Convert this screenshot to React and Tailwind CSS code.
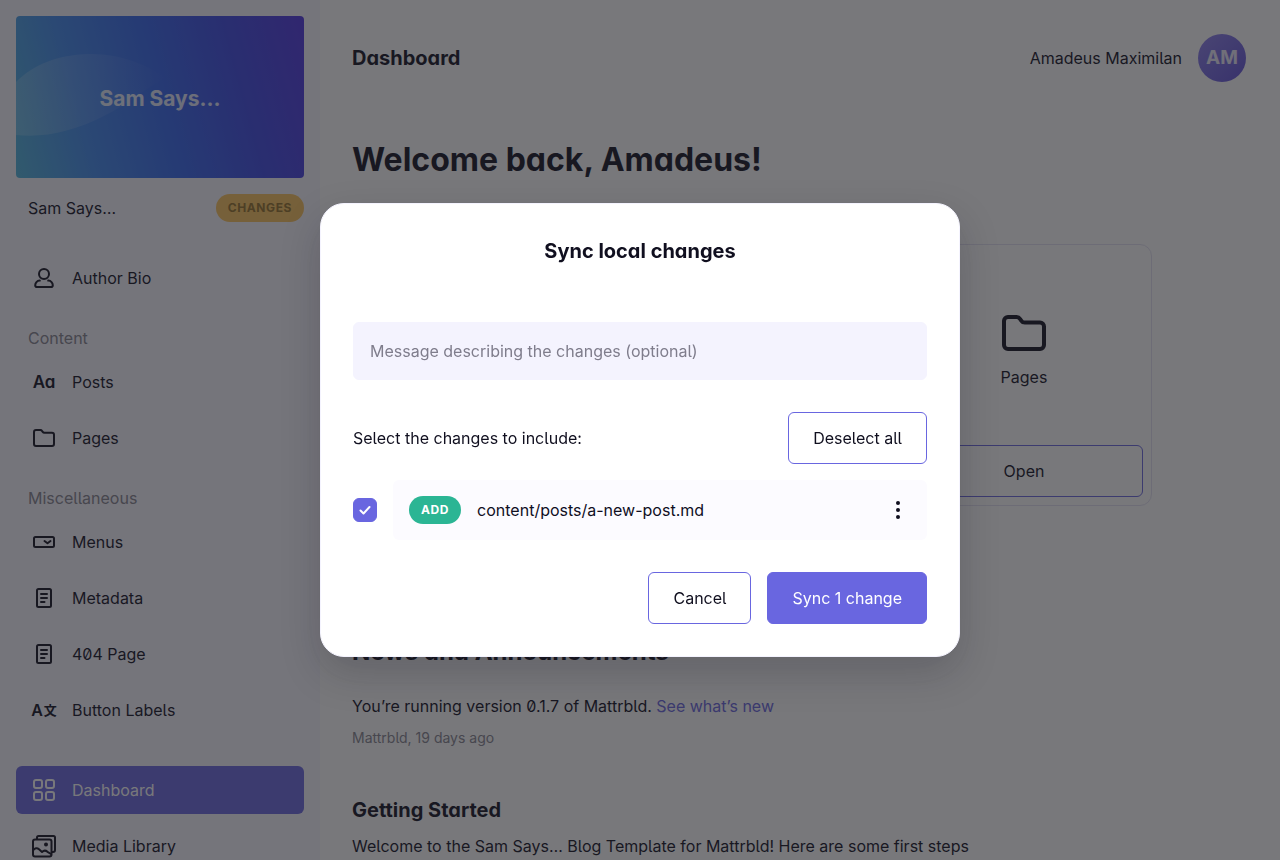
import { useState } from "react";

function Icon({ className = "size-6", children }) {
  return (
    <svg
      viewBox="0 0 24 24"
      fill="none"
      stroke="currentColor"
      strokeWidth="2"
      strokeLinecap="round"
      strokeLinejoin="round"
      aria-hidden="true"
      className={className}
    >
      {children}
    </svg>
  );
}

function UserIcon() {
  return (
    <Icon>
      <circle cx="12" cy="8" r="5" />
      <path d="M7.800 14.600C5 14.500 3.200 17 3.200 19.300c0 1.100.8 1.800 1.800 1.800h14c1 0 1.800-.7 1.800-1.800 0-2.300-1.800-4.800-4.600-4.700" />
    </Icon>
  );
}

function FolderIcon({ className }) {
  return (
    <Icon className={className}>
      <path d="M2 6a2 2 0 0 1 2-2h4.3c.7 0 1.3.3 1.7.9l.7 1c.4.6 1 .9 1.7.9H20a2 2 0 0 1 2 2V18a2 2 0 0 1-2 2H4a2 2 0 0 1-2-2z" />
    </Icon>
  );
}

function SelectIcon() {
  return (
    <Icon>
      <rect x="2" y="7" width="20" height="10" rx="1.5" />
      <path d="M12.500 11l3 2.200 3-2.200" />
    </Icon>
  );
}

function DocumentIcon() {
  return (
    <Icon>
      <rect x="5" y="3" width="14" height="18" rx="1.5" />
      <path d="M9 8h6M9 12h6M9 16h3.5" />
    </Icon>
  );
}

function GridIcon() {
  return (
    <Icon>
      <rect x="2" y="2" width="8" height="8" rx="2" />
      <rect x="14" y="2" width="8" height="8" rx="2" />
      <rect x="2" y="14" width="8" height="8" rx="2" />
      <rect x="14" y="14" width="8" height="8" rx="2" />
    </Icon>
  );
}

function MediaIcon() {
  return (
    <Icon>
      <path d="M5 5V3.500A1.500 1.500 0 0 1 6.500 2H21.500A1.500 1.500 0 0 1 23 3.500V16a2 2 0 0 1-2 2h-1" />
      <rect x="1" y="5.500" width="18.500" height="17" rx="2" />
      <path d="M1 16.500c2-2.500 4-3 6-1.200l3 2.700c2-2 4-1.500 5.500-.2l3.500 2.200" />
      <circle cx="14" cy="10.500" r="1" fill="currentColor" />
    </Icon>
  );
}

function LettersIcon() {
  return (
    <span aria-hidden="true" className="flex w-6 justify-center text-[17px] leading-6 font-semibold [font-feature-settings:'cv11']">
      Aa
    </span>
  );
}

function TranslateIcon() {
  return (
    <span aria-hidden="true" className="flex w-6 items-center justify-center gap-px text-base leading-6 font-semibold">
      A
      <span className="font-['Noto_Sans_CJK_JP',sans-serif] text-[13px] leading-6 font-bold">文</span>
    </span>
  );
}

const contentLinks = [
  { label: "Posts", icon: <LettersIcon /> },
  { label: "Pages", icon: <FolderIcon /> },
];

const miscLinks = [
  { label: "Menus", icon: <SelectIcon /> },
  { label: "Metadata", icon: <DocumentIcon /> },
  { label: "404 Page", icon: <DocumentIcon /> },
  { label: "Button Labels", icon: <TranslateIcon /> },
];

const appLinks = [
  { label: "Dashboard", icon: <GridIcon />, active: true },
  { label: "Media Library", icon: <MediaIcon /> },
];

function NavLink({ label, icon, active }) {
  return (
    <li>
      <a
        href="#"
        className={`flex h-12 items-center gap-4 rounded-md px-4 ${active ? "bg-[#6966e0] text-white" : ""}`}
      >
        {icon}
        {label}
      </a>
    </li>
  );
}

function NavList({ links }) {
  return (
    <ul className="flex flex-col gap-2">
      {links.map((link) => (
        <NavLink key={link.label} {...link} />
      ))}
    </ul>
  );
}

function Banner() {
  return (
    <div className="relative h-[162px] overflow-hidden rounded-sm bg-linear-[75deg,#4fb4dc_0%,#3f88ee_25%,#3366ee_50%,#3b48e4_75%,#4e34e0_100%]">
      <svg viewBox="0 0 288 162" preserveAspectRatio="none" aria-hidden="true" className="absolute inset-0 size-full">
        <defs>
          <linearGradient id="lobe" x1="0" y1="0" x2="1" y2="0">
            <stop offset="0" stopColor="#fff" stopOpacity="0.18" />
            <stop offset="1" stopColor="#fff" stopOpacity="0" />
          </linearGradient>
        </defs>
        <path
          d="M0 66C18 48 42 39 72 38c30-1 56 9 78 24-18 8-34 24-62 38-30 15-58 22-88 19z"
          fill="url(#lobe)"
        />
      </svg>
      <div className="relative flex h-full items-center justify-center pt-1 text-[21px] font-bold text-white/85">
        Sam Says…
      </div>
    </div>
  );
}

function Sidebar() {
  return (
    <aside className="w-80 shrink-0 overflow-hidden bg-[#f8f7ff] p-4">
      <Banner />
      <div className="mt-4 flex items-center justify-between pl-3">
        <span>Sam Says…</span>
        <span className="rounded-full bg-[#fac35c] px-3 text-xs leading-7 font-bold tracking-wider text-[#94702a]">
          CHANGES
        </span>
      </div>
      <nav className="mt-8">
        <NavList links={[{ label: "Author Bio", icon: <UserIcon /> }]} />
        <h2 className="mt-6 mb-2 pl-3 text-[#85848f]">Content</h2>
        <NavList links={contentLinks} />
        <h2 className="mt-6 mb-2 pl-3 text-[#85848f]">Miscellaneous</h2>
        <NavList links={miscLinks} />
        <div className="mt-8">
          <NavList links={appLinks} />
        </div>
      </nav>
    </aside>
  );
}

function DashboardPage() {
  return (
    <main className="min-w-0 flex-1 overflow-hidden bg-white px-8">
      <header className="flex items-center justify-between pt-[34px]">
        <h1 className="text-xl font-bold [font-feature-settings:'cv11']">Dashboard</h1>
        <div className="flex items-center gap-4 pr-0.5">
          <span>Amadeus Maximilan</span>
          <span className="flex size-12 items-center justify-center rounded-full bg-linear-135 from-[#8d80ec] to-[#5f4fd8] text-[19px] font-bold text-white/85">
            AM
          </span>
        </div>
      </header>

      <div className="max-w-[800px]">
        <h2 className="mt-14 text-[32px] leading-11 font-bold [font-feature-settings:'cv11']">
          Welcome back, Amadeus!
        </h2>

        <div className="mt-[62px] grid grid-cols-3 gap-4">
          <section className="col-start-3 flex h-[262px] flex-col rounded-xl border border-[#e4e2f2] p-2">
            <div className="flex flex-1 flex-col items-center justify-center gap-2">
              <FolderIcon className="size-12" />
              <h3>Pages</h3>
            </div>
            <button type="button" className="h-13 rounded-md border border-[#6966e0]">
              Open
            </button>
          </section>
        </div>

        <h2 className="mt-32 text-2xl leading-9 font-bold [font-feature-settings:'cv11']">
          News and Announcements
        </h2>
        <p className="mt-6">
          You’re running version 0.1.7 of Mattrbld.{" "}
          <a href="#" className="text-[#6966e0]">
            See what’s new
          </a>
        </p>
        <p className="mt-2 text-sm leading-6 text-[#85848f]">Mattrbld, 19 days ago</p>
        <h3 className="mt-11 text-xl leading-8 font-bold [font-feature-settings:'cv11']">Getting Started</h3>
        <p className="mt-2">
          Welcome to the Sam Says… Blog Template for Mattrbld! Here are some first steps
        </p>
      </div>
    </main>
  );
}

function SyncDialog() {
  const [message, setMessage] = useState("");
  const [checked, setChecked] = useState(true);

  return (
    <div className="fixed inset-0 flex items-center justify-center bg-[#1e1e23]/60">
      <div
        role="dialog"
        aria-modal="true"
        aria-labelledby="sync-title"
        className="w-full max-w-[640px] rounded-3xl border border-[#f4f3fe] bg-white p-8 shadow-[0_16px_40px_rgba(15,14,30,0.2)]"
      >
        <h2 id="sync-title" className="text-center text-xl leading-[30px] font-bold [font-feature-settings:'cv11']">
          Sync local changes
        </h2>

        <input
          type="text"
          aria-label="Message describing the changes"
          placeholder="Message describing the changes (optional)"
          value={message}
          onChange={(e) => setMessage(e.target.value)}
          className="mt-14 block w-full rounded-md border border-[#f4f3fe] bg-[#f4f3fe] p-4 placeholder:text-[#7f7d8c]"
        />

        <div className="mt-8 flex items-center justify-between">
          <span>Select the changes to include:</span>
          <button
            type="button"
            onClick={() => setChecked(!checked)}
            className="h-13 rounded-md border border-[#6966e0] px-6"
          >
            {checked ? "Deselect all" : "Select all"}
          </button>
        </div>

        <div className="mt-4 flex items-center gap-4">
          <label className="grid shrink-0">
            <input
              type="checkbox"
              aria-label="content/posts/a-new-post.md"
              checked={checked}
              onChange={(e) => setChecked(e.target.checked)}
              className="col-start-1 row-start-1 size-6 appearance-none rounded-md border border-[#6966e0] checked:bg-[#6966e0]"
            />
            <Icon className="pointer-events-none col-start-1 row-start-1 size-6 text-white">
              <path d="M7.500 12.500l3 3 6-6.500" />
            </Icon>
          </label>
          <div className="flex h-15 flex-1 items-center rounded-md bg-[#fcfbff] px-4">
            <span className="rounded-full bg-[#2bb594] px-3 text-xs leading-7 font-bold tracking-wider text-white">
              ADD
            </span>
            <span className="ml-4 flex-1">content/posts/a-new-post.md</span>
            <button type="button" aria-label="More options" className="mr-px w-6">
              <svg viewBox="0 0 24 24" fill="currentColor" aria-hidden="true" className="size-6">
                <circle cx="12" cy="5" r="2" />
                <circle cx="12" cy="12" r="2" />
                <circle cx="12" cy="19" r="2" />
              </svg>
            </button>
          </div>
        </div>

        <div className="mt-8 flex justify-end gap-4">
          <button type="button" className="h-13 rounded-md border border-[#6966e0] px-6">
            Cancel
          </button>
          <button type="button" className="h-13 rounded-md border border-[#6966e0] bg-[#6966e0] px-6 text-white">
            Sync 1 change
          </button>
        </div>
      </div>
    </div>
  );
}

function App() {
  return (
    <div className="flex h-screen overflow-hidden font-['Inter',sans-serif] text-base text-[#100f1f] [font-feature-settings:'zero','cv05']">
      <Sidebar />
      <DashboardPage />
      <SyncDialog />
    </div>
  );
}

export default App;
